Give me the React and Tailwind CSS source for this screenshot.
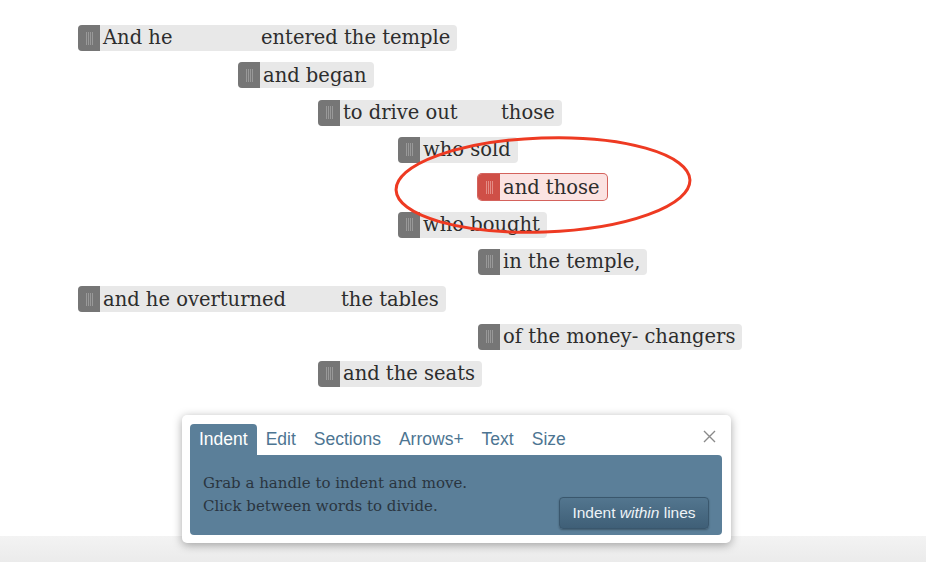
import React from 'react';

const rows = [
  { x: 78, parts: [{ text: 'And he', w: 158 }, { text: 'entered the temple' }] },
  { x: 238, parts: [{ text: 'and began' }] },
  { x: 318, parts: [{ text: 'to drive out', w: 158 }, { text: 'those' }] },
  { x: 398, parts: [{ text: 'who sold' }] },
  { x: 478, parts: [{ text: 'and those' }], selected: true },
  { x: 398, parts: [{ text: 'who bought' }] },
  { x: 478, parts: [{ text: 'in the temple,' }] },
  { x: 78, parts: [{ text: 'and he overturned', w: 238 }, { text: 'the tables' }] },
  { x: 478, parts: [{ text: 'of the money- changers' }] },
  { x: 318, parts: [{ text: 'and the seats' }] },
];

const tabs = ['Indent', 'Edit', 'Sections', 'Arrows+', 'Text', 'Size'];

const Grip = ({ selected }) => (
  <div className={`w-[22px] h-full flex items-center justify-center gap-[1px] rounded-l-[4px] ${selected ? 'bg-[#cf4f47]' : 'bg-[#767676]'}`}>
    {[0, 1, 2, 3].map(i => (
      <div key={i} className={`w-[1px] h-[13px] ${selected ? 'bg-[#e48c86]' : 'bg-[#999999]'}`} />
    ))}
  </div>
);

const Line = ({ row }) => (
  <div className="flex" style={{ paddingLeft: row.x }}>
    <div className={`flex items-stretch h-[26px] rounded-[4px] ${row.selected ? 'bg-[#fbe3e2] ring-1 ring-[#d4625c]' : 'bg-[#e8e8e8]'}`}>
      <Grip selected={row.selected} />
      <div className="flex items-center pl-[3px] pr-[7px] text-[19.5px] leading-none text-[#2d2d2d]">
        {row.parts.map((p, i) => (
          <span key={i} className="whitespace-nowrap" style={p.w ? { width: p.w } : undefined}>{p.text}</span>
        ))}
      </div>
    </div>
  </div>
);

export default function App() {
  return (
    <div className="relative w-[926px] h-[562px] bg-white overflow-hidden font-['DejaVu_Serif',serif]">
      <div className="absolute left-0 right-0 bottom-0 h-[26px] bg-gradient-to-b from-[#f3f3f3] to-[#ebebeb]" />

      <div className="relative flex flex-col gap-[11.33px] pt-[25px]">
        {rows.map((row, i) => <Line key={i} row={row} />)}
      </div>

      <svg className="absolute left-0 top-0 pointer-events-none" width="926" height="562">
        <ellipse cx="543" cy="185" rx="147" ry="47" fill="none" stroke="#ee3a22" strokeWidth="3" transform="rotate(-2 543 185)" />
      </svg>

      <div className="relative ml-[182px] mt-[28px] w-[549px] bg-white rounded-[5px] shadow-[0_2px_10px_rgba(0,0,0,0.35)] pt-[9px] pl-[8px] pr-[9px] pb-[8px]">
        <div className="flex items-end h-[31px] font-['Liberation_Sans',Arial,sans-serif] text-[17.5px]">
          {tabs.map((t, i) => (
            <div key={t} className={`h-[31px] flex items-center px-[9px] ${i === 0 ? 'bg-[#5b7f99] text-white rounded-t-[4px]' : 'text-[#4d7592]'}`}>{t}</div>
          ))}
          <div className="ml-auto self-start mt-[6px] mr-[6px] text-[#8a8a8a]">
            <svg width="13" height="13" viewBox="0 0 13 13"><path d="M1 1L12 12M12 1L1 12" stroke="currentColor" strokeWidth="1.4" /></svg>
          </div>
        </div>
        <div className="flex justify-between items-end h-[80px] bg-[#5b7f99] rounded-b-[4px] rounded-tr-[4px] pl-[13px] pr-[13px] pb-[6px]">
          <div className="self-start pt-[17px] text-[15px] leading-[23px] text-[#2a3540]">
            <div>Grab a handle to indent and move.</div>
            <div>Click between words to divide.</div>
          </div>
          <button className="w-[150px] h-[32px] rounded-[4px] border border-[#3a576d] bg-gradient-to-b from-[#53768f] to-[#3f5f77] shadow-[0_1px_2px_rgba(0,0,0,0.3)] font-['Liberation_Sans',Arial,sans-serif] text-[15.5px] text-[#eef3f7]">
            Indent <i>within</i> lines
          </button>
        </div>
      </div>
    </div>
  );
}
